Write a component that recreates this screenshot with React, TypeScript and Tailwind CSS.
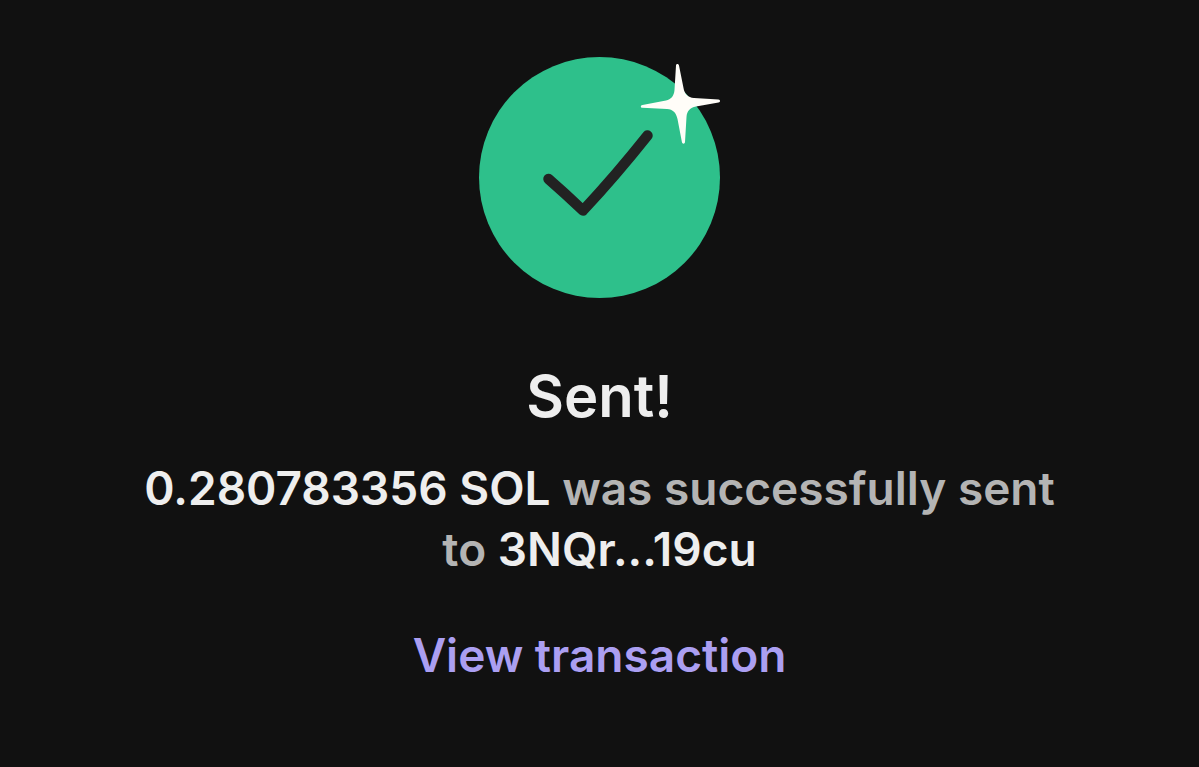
interface SentScreenProps {
  amount: string;
  recipient: string;
}

function SuccessIcon() {
  return (
    <svg
      width="241"
      height="241"
      viewBox="0 0 241 241"
      fill="none"
      aria-hidden="true"
    >
      <circle cx="120.5" cy="120.5" r="120.5" fill="#2ec08b" />
      <path
        d="M69.500 122C81 132 92.500 142.500 104 153.500C126 130 149 103 168.500 78.500"
        stroke="#222222"
        strokeWidth="10.5"
        strokeLinecap="round"
        strokeLinejoin="round"
      />
      {/* sparkle */}
      <path
        d="M197 8.500C197 6.500 199.700 6.500 200 8.500L204.500 31C205.500 37 209 40.500 215 41L239.500 42.500C241.500 42.700 241.500 45 239.500 45.500L217 49.500C211 50.500 208 54 207.500 60L206 85C205.800 87.300 203.300 87.300 202.900 85L198.500 62C197 55.500 194 52.500 188 52L163.500 50.800C161.300 50.500 161.300 48.300 163.500 48L187 43.500C192 42.500 195 39 195.500 33Z"
        fill="#fffdf8"
      />
    </svg>
  );
}

function SentScreen({ amount, recipient }: SentScreenProps) {
  return (
    <main className="flex min-h-screen flex-col items-center bg-[#111111] px-8 pt-[57px] font-['Inter',sans-serif] font-semibold">
      <SuccessIcon />
      <h1 className="mt-16 text-[58px] leading-[68px] text-[#eeeeee]">
        Sent!
      </h1>
      <p className="mt-7 max-w-[930px] text-center text-[46px] leading-[61px] text-[#b4b4b4]">
        <span className="text-[#eeeeee]">{amount}</span>{' '}
        <span>was successfully sent</span> <span>to</span>{' '}
        <span className="text-[#eeeeee]">{recipient}</span>
      </p>
      <a href="#transaction" className="mt-11 text-[46px] leading-[62px] text-[#ab9ff2]">
        View transaction
      </a>
    </main>
  );
}

export default function App() {
  return <SentScreen amount="0.280783356 SOL" recipient="3NQr...19cu" />;
}
